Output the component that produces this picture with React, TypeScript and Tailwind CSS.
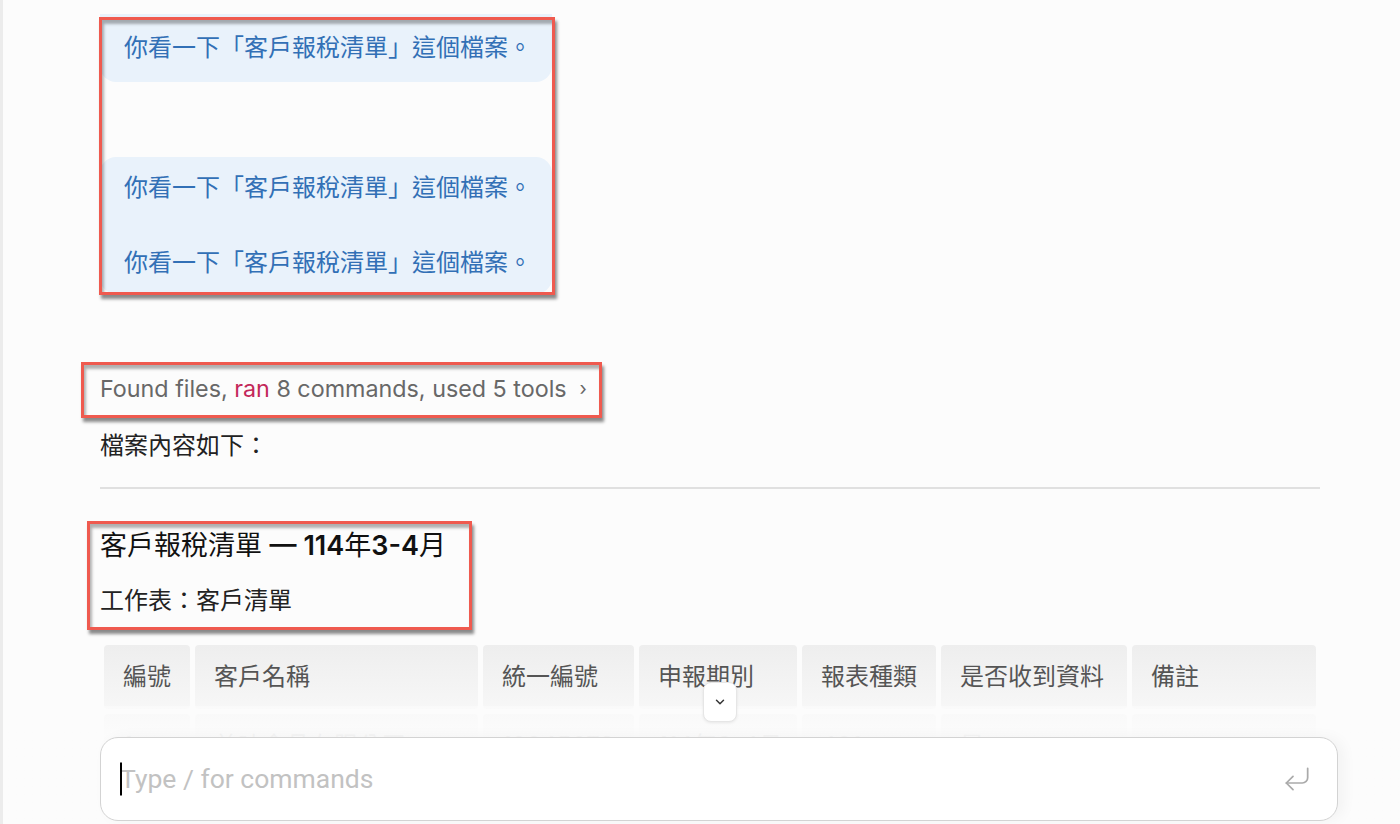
import React from 'react';
import { ChevronDown, CornerDownLeft } from 'lucide-react';

const columns = [
  { label: '編號', w: 'w-[86px]' },
  { label: '客戶名稱', w: 'w-[283px]' },
  { label: '統一編號', w: 'w-[151px]' },
  { label: '申報期別', w: 'w-[158px]' },
  { label: '報表種類', w: 'w-[134px]' },
  { label: '是否收到資料', w: 'w-[186px]' },
  { label: '備註', w: 'w-[184px]' },
];

const firstRow = ['1', '美味食品有限公司', '12345678', '114年3-4月', '401', '是', ''];

const ask = '你看一下「客戶報稅清單」這個檔案。';

// red annotation frame drawn over the screenshot
const Mark = ({ className }: { className: string }) => (
  <div
    className={`pointer-events-none absolute border-[3px] border-[#ef5a4f] shadow-[2px_4px_3px_rgba(0,0,0,0.45),inset_2px_4px_3px_rgba(0,0,0,0.3)] ${className}`}
  ></div>
);

export default function App() {
  return (
    <div className="relative h-screen w-full overflow-hidden border-l-[3px] border-[#ececec] bg-[#fcfcfc] font-['Inter','Noto_Sans_CJK_TC',sans-serif] text-[#222]">
      <main className="pl-[97px] pr-[80px] pt-[14px]">
        {/* user messages */}
        <div className="w-[452px] whitespace-nowrap rounded-b-[16px] bg-[#e9f2fb] px-[24px] py-[22px] text-[24px] leading-[24px] text-[#3270b6]">
          {ask}
        </div>
        <div className="mt-[75px] flex w-[452px] flex-col gap-[51px] whitespace-nowrap rounded-[16px] bg-[#e9f2fb] px-[24px] py-[19px] text-[24px] leading-[24px] text-[#3270b6]">
          <p>{ask}</p>
          <p>{ask}</p>
        </div>

        {/* assistant reply */}
        <div className="mt-[81px] flex items-center gap-[13px] whitespace-nowrap text-[23.3px] leading-[28px] text-[#686868]">
          <span>
            Found files, <span className="text-[#c3285a]">ran</span> 8 commands, used 5 tools
          </span>
          <span className="text-[19px] text-[#666]">›</span>
        </div>
        <p className="mt-[27px] text-[24px] leading-[32px]">檔案內容如下：</p>
        <div className="mt-[25px] h-[1.5px] bg-[#e0e0e0]"></div>

        <h2 className="mt-[39px] text-[27px] leading-[36px] text-[#111]">
          客戶報稅清單 <span className="font-semibold">— 114</span>年<span className="font-semibold">3-4</span>月
        </h2>
        <p className="mt-[21px] text-[24px] leading-[32px]">工作表：客戶清單</p>

        {/* sheet table */}
        <div className="mt-[28px] flex flex-col gap-[5px] pl-[4px]">
          <div className="flex gap-[5px]">
            {columns.map((c) => (
              <div
                key={c.label}
                className={`${c.w} flex h-[64px] shrink-0 items-center whitespace-nowrap rounded-[4px] bg-gradient-to-b from-[#eeeeee] to-[#f7f7f7] px-[19px] text-[24px] text-[#555]`}
              >
                {c.label}
              </div>
            ))}
          </div>
          <div className="flex gap-[5px]">
            {columns.map((c, i) => (
              <div
                key={c.label}
                className={`${c.w} flex h-[64px] shrink-0 items-center whitespace-nowrap rounded-[4px] bg-[#f4f4f4] px-[19px] text-[24px] text-[#999]`}
              >
                {firstRow[i]}
              </div>
            ))}
          </div>
        </div>
      </main>

      {/* fade under the composer */}
      <div className="pointer-events-none absolute bottom-0 left-0 right-0 top-[706px] bg-gradient-to-b from-[rgba(252,252,252,0.55)] via-[rgba(252,252,252,0.93)] via-25% to-[#fcfcfc]"></div>

      {/* scroll to bottom */}
      <button className="absolute left-[700px] top-[682px] flex h-[40px] w-[34px] items-center justify-center rounded-[8px] border border-[#e6e6e6] bg-white shadow-[0_1px_3px_rgba(0,0,0,0.08)]">
        <ChevronDown size={14} strokeWidth={2.5} className="text-[#333]" />
      </button>

      {/* composer */}
      <div className="absolute bottom-[3px] left-[97px] right-[62px] flex h-[84px] items-center rounded-[18px] border-[1.5px] border-[#d3d3d3] bg-white pl-[19px] pr-[24px] shadow-[6px_0_14px_rgba(0,0,0,0.04)]">
        <div className="relative flex flex-1 items-center">
          <span className="absolute left-0 top-1/2 h-[33px] w-[2px] -translate-y-1/2 bg-black"></span>
          <span className="whitespace-nowrap font-['Roboto',sans-serif] text-[26.5px] text-[#c2c2c2]">Type / for commands</span>
        </div>
        <CornerDownLeft size={32} strokeWidth={1.3} className="text-[#aaa]" />
      </div>

      <Mark className="left-[96px] top-[17px] h-[278px] w-[456px]" />
      <Mark className="left-[78px] top-[362px] h-[56px] w-[521px]" />
      <Mark className="left-[84px] top-[521px] h-[109px] w-[385px]" />
    </div>
  );
}
